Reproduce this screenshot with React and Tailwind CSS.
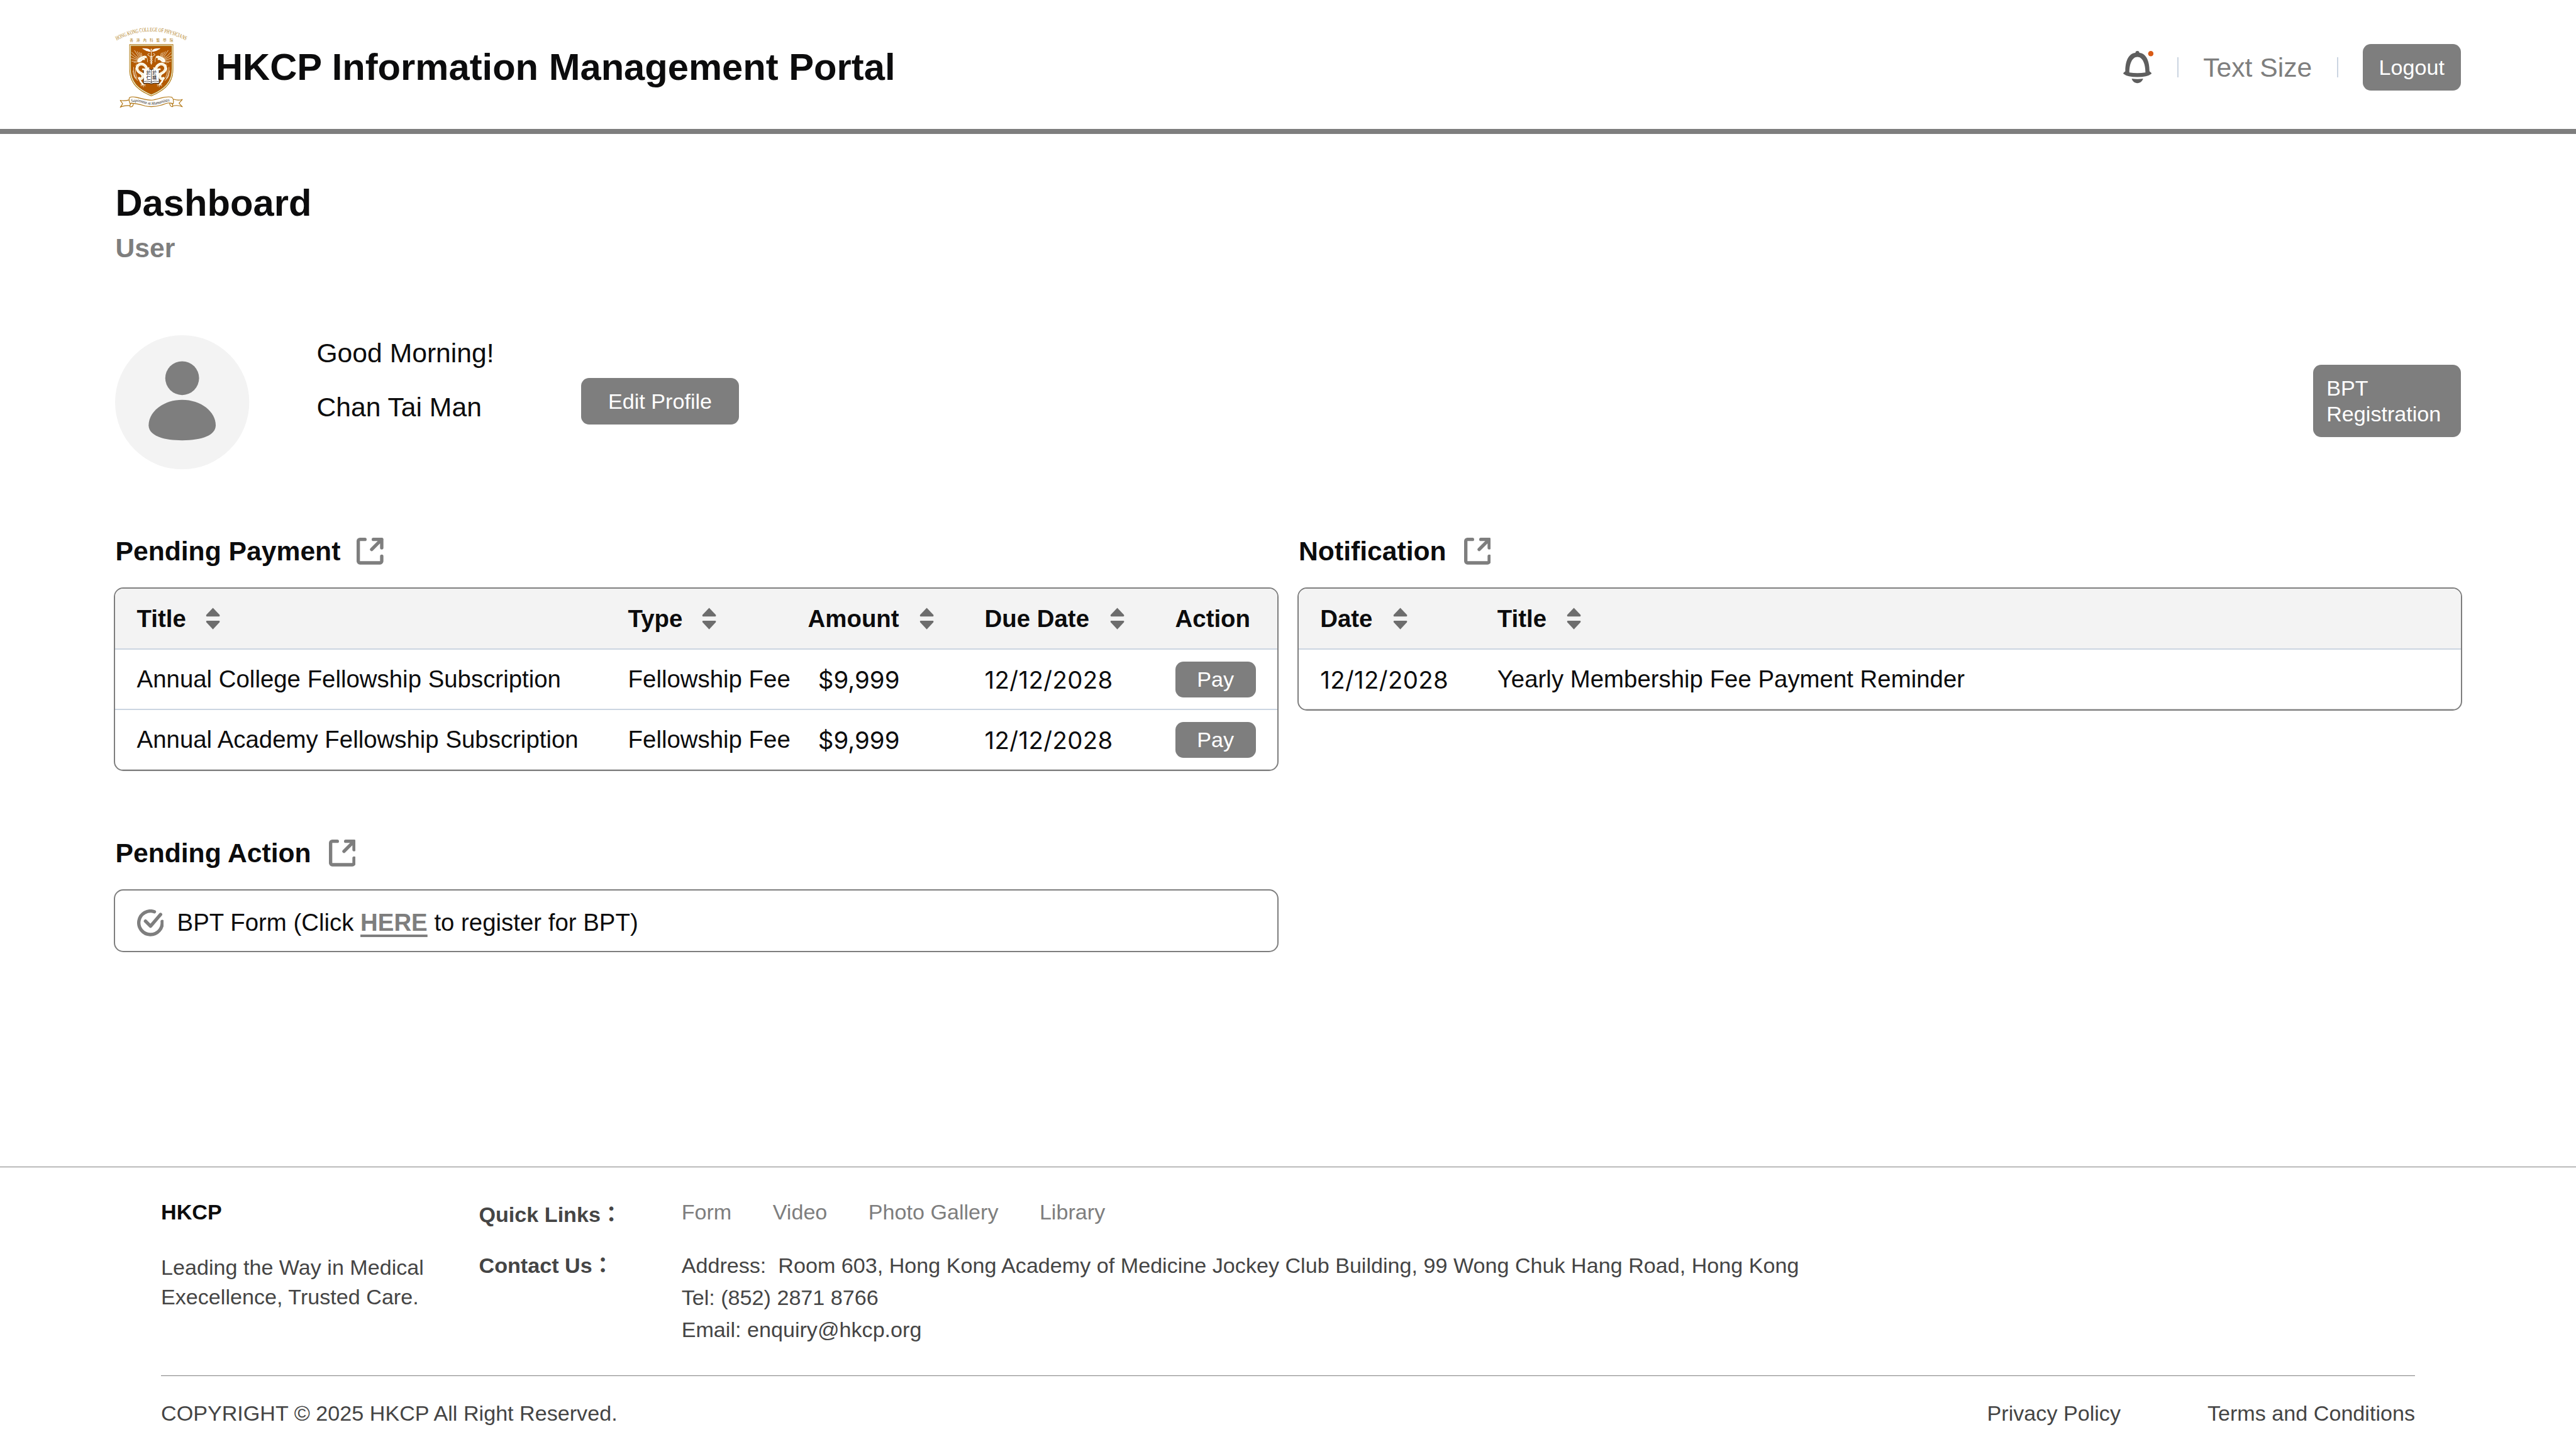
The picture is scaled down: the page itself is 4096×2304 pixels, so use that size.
import React from "react";

function CollegeCrest() {
  const shield =
    "M199 212 H593 V430 C593 560 520 625 396 677 C272 625 199 560 199 430 Z";
  return (
    <svg viewBox="72 30 720 780" className="h-16.25 w-15 shrink-0 overflow-visible">
      <defs>
        <path id="crest-arc" d="M86 178 Q396 16 706 178" />
        <path id="motto-arc" d="M215 732 C280 718 310 738 370 752 C440 766 500 724 575 722" />
        <clipPath id="crest-shield">
          <path d={shield} />
        </clipPath>
        <g id="crest-dragon">
          <g fill="none" stroke="#fffdf0" strokeWidth="4" strokeLinecap="round">
            <path d="M290 335 Q270 300 246 268 M284 338 Q250 320 222 284 M280 345 Q245 335 214 308 M282 352 Q250 350 216 338 M284 360 Q250 366 222 364 M300 330 Q285 300 270 278 M305 325 Q298 300 290 284 M312 322 Q312 300 306 290 M286 366 Q262 378 240 376" />
            <path d="M352 322 Q366 345 362 370" />
            <path d="M262 520 Q236 480 238 418 M268 512 Q246 470 256 424 M262 520 Q238 500 232 450 M275 535 Q250 525 240 490" />
            <path d="M320 572 L300 576 M320 572 L304 586 M320 572 L326 594 M320 572 L342 586 M320 572 L344 574" />
            <path d="M282 408 L262 390 M280 408 L256 402 M282 410 L268 420" />
          </g>
          <path
            d="M270 360 Q280 330 310 324 Q330 308 352 318 L354 334 L334 340 L342 352 L318 354 Q300 380 276 374 Z"
            fill="#fffdf0"
          />
          <g fill="none" stroke="#fffdf0" strokeLinecap="round" strokeLinejoin="round">
            <path strokeWidth="24" d="M352 422 Q338 390 304 388 Q268 396 268 430 Q276 462 304 472 Q328 490 316 512 Q304 530 288 516" />
            <path strokeWidth="15" d="M320 436 L352 438 L372 426 M300 470 L334 480 M288 516 L300 545 L320 570" />
          </g>
          <g fill="none" stroke="#c08a1c" strokeWidth="3" strokeDasharray="4 5">
            <path d="M352 426 Q336 394 304 392 Q272 400 272 430 Q280 458 304 468 Q330 488 318 512 Q306 532 290 518" />
            <path d="M296 352 L322 332 M322 332 L344 326" />
          </g>
        </g>
      </defs>

      <text fill="#b07c14" fontFamily='"Liberation Serif", serif' fontSize="52">
        <textPath href="#crest-arc" textLength="645" lengthAdjust="spacingAndGlyphs">
          HONG KONG COLLEGE OF PHYSICIANS
        </textPath>
      </text>
      <text
        x="203"
        y="187"
        fill="#b07c14"
        fontFamily='"Noto Sans CJK TC", sans-serif'
        fontSize="32"
        letterSpacing="27.5"
      >
        香港內科醫學院
      </text>

      <g clipPath="url(#crest-shield)">
        <path d={shield} fill="#b35900" />
        <path d={shield} fill="none" stroke="#a98118" strokeWidth="34" />
        <path d={shield} fill="none" stroke="#ffffff" strokeWidth="24" />
        <path d={shield} fill="none" stroke="#b07a10" strokeWidth="12" />
      </g>

      <g fill="none" stroke="#fffdf0" strokeWidth="5" strokeLinecap="round">
        <path d="M396 258 V392" />
        <path d="M378 296 Q360 296 366 310 Q380 322 396 322 Q416 334 396 346 Q376 358 396 368 Q412 378 396 386" />
        <path d="M414 296 Q432 296 426 310 Q412 322 396 322 Q376 334 396 346 Q416 358 396 368 Q380 378 396 386" />
      </g>
      <circle cx="396" cy="258" r="6" fill="#fffdf0" />
      <path
        d="M392 278 Q386 252 350 250 L314 248 Q322 258 334 260 Q334 266 346 267 Q350 274 362 273 Q372 280 392 278 Z M400 278 Q406 252 442 250 L478 248 Q470 258 458 260 Q458 266 446 267 Q442 274 430 273 Q420 280 400 278 Z"
        fill="#ffffff"
      />

      <path
        d="M326 436 Q370 426 396 440 Q422 426 466 436 V562 Q420 556 396 566 Q372 556 326 562 Z"
        fill="#ffffff"
        stroke="#1a1414"
        strokeWidth="5"
      />
      <path d="M332 546 Q370 536 396 552 Q422 536 460 546 M396 440 V560" fill="none" stroke="#1a1414" strokeWidth="4" />
      <g fill="#1a1414" fontFamily='"Noto Sans CJK TC", sans-serif' fontSize="38" fontWeight="500">
        <text x="352" y="481">於</text>
        <text x="352" y="524">仁</text>
        <text x="406" y="481">於</text>
        <text x="406" y="524">精</text>
      </g>

      <use href="#crest-dragon" />
      <use href="#crest-dragon" transform="translate(792 0) scale(-1 1)" />

      <g fill="#ffffff" stroke="#b07410" strokeWidth="6" strokeLinejoin="round">
        <path d="M198 710 Q155 722 118 714 L140 744 L118 776 Q150 756 212 762 Z" />
        <path d="M594 704 Q636 718 674 706 L644 740 L674 772 Q636 752 580 766 Z" />
        <path d="M232 738 Q202 736 206 772 Q232 776 236 744 Z" />
        <path d="M560 738 Q590 736 588 770 Q566 774 560 744 Z" />
        <path d="M200 690 Q220 678 260 686 C320 700 350 712 400 712 C460 708 520 668 580 686 Q600 704 592 744 Q560 730 520 744 C470 764 400 778 340 764 C290 750 250 736 206 742 Q192 712 200 690 Z" />
      </g>
      <text
        fill="#241a18"
        fontFamily='"Liberation Serif", serif'
        fontStyle="italic"
        fontSize="40"
      >
        <textPath href="#motto-arc" textLength="352" lengthAdjust="spacingAndGlyphs">
          Sapientia et Humanitas
        </textPath>
      </text>
    </svg>
  );
}

function BellIcon() {
  return (
    <svg viewBox="42 66 288 288" className="-mr-[2px] size-6 shrink-0">
      <path
        fillRule="evenodd"
        fill="#5e5e5e"
        d="M186 66 A18 18 0 0 1 204 83 C262 89 294 150 294 247 L310 262 Q314 267 310 272 Q276 300 186 300 Q96 300 62 272 Q58 267 62 262 L78 247 C78 150 110 89 168 83 A18 18 0 0 1 186 66 Z M186 119 C140 119 114 180 114 258 Q150 264 186 264 Q222 264 258 258 C258 180 232 119 186 119 Z"
      />
      <path fill="#5e5e5e" d="M135 314 Q186 322 237 314 C231 337 212 354 186 354 C160 354 141 337 135 314 Z" />
      <circle cx="306" cy="90" r="24" fill="#d95b16" />
    </svg>
  );
}

function OpenIcon() {
  return (
    <svg
      viewBox="0 0 20 20"
      className="size-5 shrink-0"
      fill="none"
      stroke="#7e7e7e"
      strokeWidth="2.5"
      strokeLinecap="round"
      strokeLinejoin="round"
    >
      <path d="M6.25 1.25 H2.5 A1.25 1.25 0 0 0 1.25 2.5 V17.5 A1.25 1.25 0 0 0 2.5 18.75 H17.5 A1.25 1.25 0 0 0 18.75 17.5 V13.75" />
      <path d="M12.5 1.25 H18.75 V7.5 M18.75 1.25 L11.25 8.75" />
    </svg>
  );
}

function CheckRingIcon() {
  return (
    <svg
      viewBox="0 0 20 20"
      className="size-5 shrink-0"
      fill="none"
      stroke="#7e7e7e"
      strokeWidth="2.5"
      strokeLinecap="round"
      strokeLinejoin="round"
    >
      <path d="M18.7 9 A8.75 8.75 0 1 1 12.9 1.74" />
      <path d="M6.25 8.75 L10 12.5 L17.5 3.75" />
    </svg>
  );
}

function SortIcon() {
  return (
    <svg viewBox="0 0 24 24" className="size-6 shrink-0" fill="#6d6d6d">
      <path d="M12 4 L16.9 9.2 Q17.4 10.4 16.5 10.4 H7.5 Q6.6 10.4 7.1 9.2 Z" />
      <path d="M12 20 L16.9 14.8 Q17.4 13.6 16.5 13.6 H7.5 Q6.6 13.6 7.1 14.8 Z" />
    </svg>
  );
}

function Avatar() {
  return (
    <svg viewBox="0 0 100 100" className="size-25 shrink-0">
      <circle cx="50" cy="50" r="50" fill="#f3f3f3" />
      <circle cx="50" cy="32" r="12.6" fill="#7e7e7e" />
      <path
        fill="#7e7e7e"
        d="M50 48.2 C64 48.2 75 57 75 67.2 C75 74.5 65 78.4 50 78.4 C35 78.4 25 74.5 25 67.2 C25 57 36 48.2 50 48.2 Z"
      />
    </svg>
  );
}

function SectionTitle({ children, gap = "gap-[28px]" }) {
  return (
    <div className={`flex items-center ${gap}`}>
      <h2 className="text-[42.667px] leading-[51.2px] font-bold">{children}</h2>
      <OpenIcon />
    </div>
  );
}

function HeadCell({ children, sortable = true, gap = "gap-[17px]" }) {
  return (
    <div className={`flex items-center pl-4 font-bold ${gap}`}>
      {children}
      {sortable && <SortIcon />}
    </div>
  );
}

const payments = [
  { title: "Annual College Fellowship Subscription", type: "Fellowship Fee", amount: "$9,999", due: "12/12/2028" },
  { title: "Annual Academy Fellowship Subscription", type: "Fellowship Fee", amount: "$9,999", due: "12/12/2028" },
];

const paymentCols = "grid grid-cols-[781px_286px_281px_303px_1fr] items-center";
const noticeCols = "grid grid-cols-[281.6px_1fr] items-center";
const headRow = "h-[97px] border-b-2 border-[#cbd5e1] bg-[#f3f3f3]";
const dateCell = "pt-[2px] pl-4 tracking-[0.35px] font-['Inter',sans-serif]";
const panel =
  "-mx-[2px] overflow-hidden rounded-[15px] border-2 border-[#7e7e7e] bg-white text-[38.4px] leading-[44px] whitespace-nowrap";

export default function App() {
  return (
    <div className="flex h-[2304px] w-[4096px] flex-col overflow-hidden bg-white font-['Liberation_Sans',Arial,sans-serif] text-[#0c0c0d] [--spacing:8.53333px]">
      <header className="flex h-25 shrink-0 items-center border-b-[8.533px] border-[#7e7e7e] px-21.5 pt-1">
        <CollegeCrest />
        <h1 className="ml-[31.5px] text-[59.733px] leading-[68px] font-bold whitespace-nowrap">
          HKCP Information Management Portal
        </h1>
        <div className="ml-auto flex items-center gap-[39.4px]">
          <BellIcon />
          <span className="h-3.75 w-[2px] bg-[#cbd5e1]" />
          <span className="text-[42.667px] leading-[50px] whitespace-nowrap text-[#7e7e7e]">Text Size</span>
          <span className="h-3.75 w-[2px] bg-[#cbd5e1]" />
          <button className="h-8.75 rounded-[12.8px] bg-[#7e7e7e] px-3 text-[34.133px] leading-[40px] text-white">
            Logout
          </button>
        </div>
      </header>

      <main className="px-21.5 pt-8.75">
        <h1 className="text-[59.733px] leading-[70.4px] font-bold">Dashboard</h1>
        <p className="mt-1.25 text-[42.667px] leading-[51.2px] font-bold text-[#7e7e7e]">User</p>

        <section className="mt-13.25 flex items-center">
          <Avatar />
          <div className="ml-12.5 flex w-49.25 flex-col gap-4 self-start pt-[3px] text-[42.667px] leading-[51.2px]">
            <p>Good Morning!</p>
            <p>Chan Tai Man</p>
          </div>
          <button className="mb-0.5 h-8.75 w-29.5 rounded-[12.8px] bg-[#7e7e7e] text-[34.133px] leading-[40px] text-white">
            Edit Profile
          </button>
          <button className="mb-0.5 ml-auto h-13.5 w-27.5 rounded-[12.8px] bg-[#7e7e7e] px-2.5 text-left text-[34.133px] leading-[41px] text-white">
            BPT Registration
          </button>
        </section>

        <div className="mt-12.25 grid grid-cols-2 items-start gap-4">
          <div>
            <SectionTitle gap="gap-[26px]">Pending Payment</SectionTitle>
            <div className={`mt-3.75 ${panel}`}>
              <div className={`${paymentCols} ${headRow}`}>
                <HeadCell>Title</HeadCell>
                <HeadCell>Type</HeadCell>
                <HeadCell gap="gap-[18.5px]">Amount</HeadCell>
                <HeadCell gap="gap-[19px]">Due Date</HeadCell>
                <HeadCell sortable={false}>Action</HeadCell>
              </div>
              {payments.map((row) => (
                <div
                  key={row.title}
                  className={`${paymentCols} h-11.25 border-b-2 border-[#cbd5e1] last:h-[95px] last:border-b last:border-[#cfcfcf]`}
                >
                  <div className="pl-4">{row.title}</div>
                  <div className="pl-4">{row.type}</div>
                  <div className="w-[180px] pt-[2px] pl-4 text-right font-['Inter',sans-serif]">{row.amount}</div>
                  <div className={dateCell}>{row.due}</div>
                  <div className="pl-4">
                    <button className="block h-6.75 w-15 rounded-[12.8px] bg-[#7e7e7e] text-[34.133px] leading-[40px] text-white">
                      Pay
                    </button>
                  </div>
                </div>
              ))}
            </div>

            <div className="mt-12.25">
              <SectionTitle>Pending Action</SectionTitle>
            </div>
            <div className={`mt-3.75 flex h-11.75 items-center gap-2.5 px-4 pt-0.75 ${panel}`}>
              <CheckRingIcon />
              <p>
                BPT Form (Click{" "}
                <a className="font-bold text-[#7e7e7e] underline decoration-[4px] underline-offset-[6px] [text-decoration-skip-ink:none]">
                  HERE
                </a>{" "}
                to register for BPT)
              </p>
            </div>
          </div>

          <div>
            <SectionTitle>Notification</SectionTitle>
            <div className={`mt-3.75 ${panel}`}>
              <div className={`${noticeCols} ${headRow}`}>
                <HeadCell gap="gap-[18.5px]">Date</HeadCell>
                <HeadCell gap="gap-[18px]">Title</HeadCell>
              </div>
              <div className={`${noticeCols} h-[95px] border-b border-[#cfcfcf]`}>
                <div className={dateCell}>12/12/2028</div>
                <div className="pl-4">Yearly Membership Fee Payment Reminder</div>
              </div>
            </div>
          </div>
        </div>
      </main>

      <footer className="mt-auto h-[449px] shrink-0 border-t border-[#7e7e7e] px-30 pt-[50px] text-[34.133px] text-[#454545]">
        <div className="flex border-b border-[#7e7e7e] pb-[46px]">
          <div className="w-[505.5px]">
            <p className="leading-[42.667px] font-bold text-[#0c0c0d]">HKCP</p>
            <p className="mt-[43.5px] leading-[46.933px]">
              Leading the Way in Medical
              <br />
              Execellence, Trusted Care.
            </p>
          </div>
          <div className="flex w-[322.2px] flex-col gap-4.5 pt-0.5 leading-[42.667px] font-bold font-['Liberation_Sans','Noto_Sans_CJK_TC',sans-serif]">
            <p>Quick Links：</p>
            <p>Contact Us：</p>
          </div>
          <div>
            <nav className="flex gap-[65.4px] leading-[42.667px] text-[#7e7e7e]">
              <a>Form</a>
              <a>Video</a>
              <a>Photo Gallery</a>
              <a>Library</a>
            </nav>
            <div className="mt-4.5 leading-[51.2px] whitespace-pre">
              <p>{"Address:  Room 603, Hong Kong Academy of Medicine Jockey Club Building, 99 Wong Chuk Hang Road, Hong Kong"}</p>
              <p>Tel: (852) 2871 8766</p>
              <p>Email: enquiry@hkcp.org</p>
            </div>
          </div>
        </div>
        <div className="flex pt-4.5 leading-[42.667px]">
          <p>COPYRIGHT © 2025 HKCP All Right Reserved.</p>
          <a className="ml-auto">Privacy Policy</a>
          <a className="ml-[138px]">Terms and Conditions</a>
        </div>
      </footer>
    </div>
  );
}
